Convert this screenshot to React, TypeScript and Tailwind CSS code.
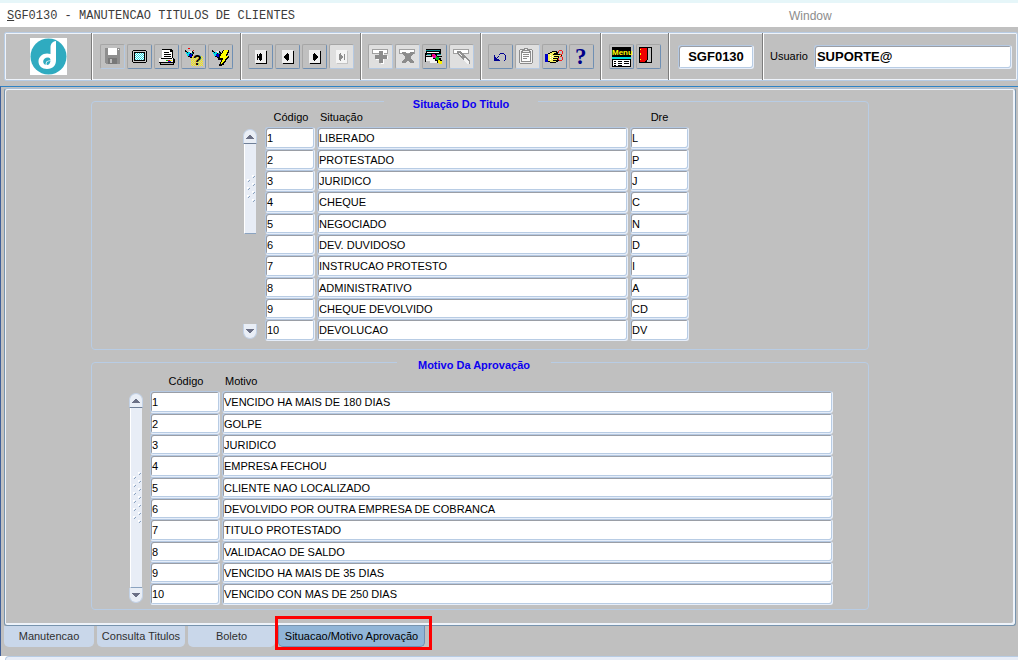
import type { ReactNode } from 'react';
import { clsx } from 'clsx';

const situacoes = [
  ['1', 'LIBERADO', 'L'],
  ['2', 'PROTESTADO', 'P'],
  ['3', 'JURIDICO', 'J'],
  ['4', 'CHEQUE', 'C'],
  ['5', 'NEGOCIADO', 'N'],
  ['6', 'DEV. DUVIDOSO', 'D'],
  ['7', 'INSTRUCAO PROTESTO', 'I'],
  ['8', 'ADMINISTRATIVO', 'A'],
  ['9', 'CHEQUE DEVOLVIDO', 'CD'],
  ['10', 'DEVOLUCAO', 'DV'],
];

const motivos = [
  ['1', 'VENCIDO HA MAIS DE 180 DIAS'],
  ['2', 'GOLPE'],
  ['3', 'JURIDICO'],
  ['4', 'EMPRESA FECHOU'],
  ['5', 'CLIENTE NAO LOCALIZADO'],
  ['6', 'DEVOLVIDO POR OUTRA EMPRESA DE COBRANCA'],
  ['7', 'TITULO PROTESTADO'],
  ['8', 'VALIDACAO DE SALDO'],
  ['9', 'VENCIDO HA MAIS DE 35 DIAS'],
  ['10', 'VENCIDO CON MAS DE 250 DIAS'],
];

const fieldClass =
  'block rounded-[3px] border border-t-[#b5c9e2] border-l-[#b5c9e2] border-r-[#e6eefa] border-b-[#e6eefa] bg-white text-black outline-none shadow-[inset_1px_1px_#9a9ea6,inset_-1px_-1px_#b8cce4]';

/* ---------- Toolbar icons, all on the 25px button grid ---------- */

function Icon({ children }: { children: ReactNode }) {
  return (
    <svg viewBox="0 0 25 25" className="block h-[25px] w-[25px]" shapeRendering="crispEdges" aria-hidden="true">
      {children}
    </svg>
  );
}

// Checkerboard of single pixels
function Dither({ x, y, width, height, color }: { x: number; y: number; width: number; height: number; color: string }) {
  let d = '';
  for (let row = 0; row < height; row++) {
    for (let col = row % 2; col < width; col += 2) {
      d += `M${x + col} ${y + row}h1v1h-1z`;
    }
  }
  return <path d={d} fill={color} />;
}

function SaveIcon() {
  return (
    <Icon>
      <path d="M5 4h14l1 1v15H6l-1-1z" fill="#8f8f8f" />
      <path d="M8 4h9v7H8z" fill="#fff" />
      <path d="M18 5h1v1h-1z" fill="#fff" />
      <path d="M8 14h9v6H8z" fill="#787878" />
      <path d="M10 15h2v4h-2z" fill="#c0c0c0" />
    </Icon>
  );
}

function ScreenIcon() {
  return (
    <Icon>
      <path d="M6 6h13v1h1v11h-1v1H6v-1H5V7h1z" fill="#000" />
      <path d="M6 7h13v11H6z" fill="#c8c8c8" />
      <path d="M7 8h11v9H7z" fill="#000" />
      <path d="M8 9h9v7H8z" fill="#fff" />
      <Dither x={8} y={9} width={9} height={7} color="#20d8e0" />
    </Icon>
  );
}

function PrinterIcon() {
  return (
    <Icon>
      <path d="M8 5h9l2 2v8H8z" fill="#000" />
      <path d="M8 6h8v2h2v7H8z" fill="#fff" />
      <path d="M10 8h5v1h-5zM10 10h7v1h-7zM10 12h7v1h-7z" fill="#000" />
      <path d="M5 14h15v1h1v4h-1v2H6v-2H5z" fill="#000" />
      <path d="M5 14h2v1h11v-1h1v4H5z" fill="#f0f0f0" />
      <path d="M7 19h12v1H7z" fill="#b0b0b0" />
      <path d="M12 16h2v1h-2z" fill="#00c000" />
      <path d="M14 16h2v1h-2z" fill="#f00000" />
      <path d="M16 16h2v1h-2z" fill="#f0f000" />
      <path d="M14 17h3v1h-3z" fill="#2020e0" />
    </Icon>
  );
}

function Torch() {
  return (
    <>
      <path d="M4 6h1v1h1v1h2V7h4v1h1v2h-1v2h-1v2H9v-1H7v-1H6v-2H5V8H4z" fill="#000" />
      <path d="M5 8h1v1h1v3H6v-2H5zM7 8h2v2H8v2H7z" fill="#00d8e8" />
      <path d="M8 10h3v3H9v-1H8z" fill="#0000d0" />
      <path d="M8 7h3v2H9V8H8z" fill="#e8e8e8" />
      <path d="M10 9h2v1h-2z" fill="#00a0a8" />
    </>
  );
}

function EnterQueryIcon() {
  return (
    <Icon>
      <Dither x={10} y={12} width={12} height={10} color="#fff000" />
      <Torch />
      <path d="M7 4h2v1H7zM12 6h1v1h-1z" fill="#f00000" />
      <text x="12" y="21" className="font-['Liberation_Sans',sans-serif] text-[14px] font-bold" fill="#000">
        ?
      </text>
    </Icon>
  );
}

function ExecuteQueryIcon() {
  return (
    <Icon>
      <Torch />
      <path d="M15 6h6v3h-1v2h-1v1h2v2h-1v1h-1v1h-1v2h-1v1h-1v2h-2v1h-3v-2h1v-2h1v-2h-3v-2h1v-2h1v-2h1V9h1V7h1z" fill="#000" />
      <path d="M15 6h5v2h-1v2h-1v2h2v1h-1v1h-1v1h-1v2h-1v1h-1v1h-1v1h-1v-2h1v-2h1v-2h-3v-2h1v-2h1V9h1V7h1z" fill="#ffff00" />
    </Icon>
  );
}

const glyphs = {
  first: 'M9 10h1v6H9zM14 10v6h-1v1h-1v-1h-1v-2h-1v-2h1v-2h1V9h1v1z',
  previous: 'M14 10v6h-1v1h-1v-1h-1v-1h-1v-1H9v-2h1v-1h1v-1h1V9h1v1z',
  next: 'M11 10v6h1v1h1v-1h1v-1h1v-1h1v-2h-1v-1h-1v-1h-1V9h-1v1z',
  last: 'M10 10v6h1v1h1v-2h1v-1h1v-2h-1v-1h-1V9h-1v1zM15 10h1v6h-1z',
};

function RecordIcon({ glyph, muted }: { glyph: keyof typeof glyphs; muted?: boolean }) {
  return (
    <Icon>
      <path d="M8 7h11v13H8z" fill={muted ? '#c4c4c4' : '#000'} />
      <path d="M7 6h11v13H7z" fill={muted ? '#f4f4f4' : '#f0f0f0'} />
      <path d={glyphs[glyph]} fill={muted ? '#8c8c8c' : '#000'} />
    </Icon>
  );
}

function RowBox() {
  return (
    <>
      <path d="M4 5h16v5H4z" fill="#a0a0a0" />
      <path d="M5 6h14v3H5z" fill="#fff" />
    </>
  );
}

function InsertIcon() {
  return (
    <Icon>
      <RowBox />
      <path d="M12 8h4v4h4v3h-4v5h-3v-4H8v-4h4z" fill="#fff" />
      <path d="M11 7h4v4h4v4h-4v4h-4v-4H7v-4h4z" fill="#8c8c8c" />
    </Icon>
  );
}

function RemoveIcon() {
  return (
    <Icon>
      <RowBox />
      <path d="M7 8h4v1h1v1h2V9h1V8h4v2h-1v1h-1v1h-1v3h1v1h1v1h1v2h-4v-1h-1v-1h-2v1h-1v1H7v-2h1v-1h1v-1h1v-3H9v-1H8v-1H7z" fill="#8c8c8c" />
    </Icon>
  );
}

function LockIcon() {
  return (
    <Icon>
      <path d="M4 5h15v6H4z" fill="#000" />
      <path d="M4 6h14v1H4zM5 10h14v1H5z" fill="#009090" />
      <path d="M5 8h12v1H5z" fill="#fff" />
      <path d="M3 9h1v9H3zM4 12h16v1H4z" fill="#000" />
      <path d="M4 13h13v6H8v-2H4z" fill="#f4f4f4" />
      <path d="M9 9h4v1h2v2h2v2h2v2h1v4h-3v-1h-2v-2h-2v-2h-2v-2H9z" fill="#000" />
      <path d="M10 10h3v1h1v3h-3v-1h-1z" fill="#f000b0" />
      <path d="M10 11h2v1h-2z" fill="#f02020" />
      <path d="M14 12h1v1h2v3h-3v-1h-1v-1h1z" fill="#00c020" />
      <path d="M16 16h2v1h2v3h-3v-1h-1z" fill="#f8f000" />
    </Icon>
  );
}

function ClearIcon() {
  return (
    <Icon>
      <RowBox />
      <path d="M8 7h4v1h1v1h1v1h1v1h1v1h1v1h1v1h1v1h1v1h1v4h-3v-1h-1v-1h-1v-1h-1v-1h-1v-1h-1v-1h-1v-1h-1v-1h-1v-1H9v-1H8z" fill="#909090" />
      <path d="M10 9h1v1h1v1h1v1h-1v-1h-1v-1h-1zM15 14h2v1h1v1h1v1h1v3h-2v-1h-1v-1h-1v-1h-1z" fill="#f4f4f4" />
    </Icon>
  );
}

function UndoIcon() {
  return (
    <Icon>
      <path
        d="M6 11h1v2h1v1h1v-1h1v-1h1v-2h1V9h4v1h1v1h1v5h-1v1h-1v-1h1v-5h-1v-1h-4v1h-1v2h-1v1h-1v1h2v1h1v1H6z"
        fill="#000090"
      />
    </Icon>
  );
}

function ClipboardIcon() {
  return (
    <Icon>
      <path d="M5 5h12v1h1v13h-1v1H5v-1H4V6h1z" fill="#8c8c8c" />
      <path d="M5 6h12v13H5z" fill="#f2f2f2" />
      <path d="M6 7h10v11H6z" fill="#8c8c8c" />
      <path d="M7 8h8v9H7z" fill="#fff" />
      <path d="M9 4h4v2h2v3H7V6h2z" fill="#8c8c8c" />
      <path d="M10 5h2v1h-2zM8 7h6v1H8z" fill="#f2f2f2" />
      <path d="M8 10h6v1H8zM8 12h6v1H8zM8 14h4v1H8z" fill="#8c8c8c" />
    </Icon>
  );
}

function HandIcon() {
  return (
    <Icon>
      <path d="M3 10h3v8H3z" fill="#0000c8" />
      <path d="M6 9h2V8h2V7h5v1h1v2h4v2h-3v5h-1v1h-2v1H8v-1H6z" fill="#000" />
      <path d="M6 10h2V9h2V8h4v1h-2v1h-1v1h8v1h-7v1h4v1h-5v1h4v1h-4v1h3v1H8v-1H6z" fill="#f8f060" />
      <path d="M8 11h1v1H8zM10 12h1v1h-1zM8 13h1v1H8zM10 14h1v1h-1zM8 15h1v1H8z" fill="#fff" />
      <path d="M17 6h3v1h1v3h-1v1h-2v-1h2V7h-3v2h-1V7h1zM17 17h3v-1h1v-3h-1v-1h-2v1h2v3h-3v-2h-1v2h1z" fill="#f02020" />
    </Icon>
  );
}

function HelpIcon() {
  return (
    <Icon>
      <text x="6" y="20" className="font-['Liberation_Serif',serif] text-[23px] font-bold" fill="#000088">
        ?
      </text>
    </Icon>
  );
}

function MenuIcon() {
  return (
    <Icon>
      <path d="M3 3h19v20H3z" fill="#000" />
      <text x="3" y="11" className="font-['Liberation_Sans',sans-serif] text-[8px] font-bold" fill="#ffff00">
        Menu
      </text>
      <path d="M3 13h19v2H3z" fill="#00e0e0" />
      <path d="M4 16h17v6H4z" fill="#fff" />
      <path d="M5 17h2v1H5zM9 17h4v1H9zM15 17h5v1h-5zM5 19h2v1H5zM9 19h4v1H9zM15 19h5v1h-5zM5 21h2v1H5zM9 21h4v1H9z" fill="#000" />
    </Icon>
  );
}

function ExitIcon() {
  return (
    <Icon>
      <path d="M3 3h13v16H3z" fill="#000" />
      <path d="M11 4h4v14h-4z" fill="#c0c0c0" />
      <path d="M4 4h7v12h-1v1H9v1H4z" fill="#f00000" />
      <path d="M11 4h1v12h-1v1h-1v1H9v-1h1v-1h1z" fill="#000" />
      <path d="M4 9h1v2H4zM4 5h1v1H4zM4 15h1v1H4z" fill="#ffff00" />
    </Icon>
  );
}

function Logo() {
  return (
    <svg viewBox="0 0 37 37" className="block h-[37px] w-[37px]" role="img" aria-label="Logo">
      <path d="M0 0h37v37H0z" fill="#fff" />
      <circle cx="18.500" cy="18.500" r="18" fill="#2fabc0" />
      <path
        d="M26 3c-4 .5-5.500 3-5.500 7v6c-6-2-12 1.500-12 7.500 0 4.500 3.500 7.500 8.500 7.500 6 0 9-3.500 9-9z"
        fill="#fff"
      />
      <path d="M18 19.500c-3 0-4.800 1.700-4.800 4 0 1.700 1 3 2.600 3.300-.4-2.800.7-4.300 4.700-4.300 0-2-.8-3-2.500-3z" fill="#2fabc0" />
      <path d="M16.500 26.500c.5 1 3.500.5 4-3.500-3 0-4.300 1-4 3.500z" fill="#2fabc0" />
    </svg>
  );
}

/* ---------- Toolbar ---------- */

type Tool = { name: string; icon: ReactNode; disabled?: boolean; plate?: boolean };

const toolGroups: Tool[][] = [
  [
    { name: 'Salvar', icon: <SaveIcon />, disabled: true },
    { name: 'Tela', icon: <ScreenIcon /> },
    { name: 'Imprimir', icon: <PrinterIcon /> },
    { name: 'Entrar consulta', icon: <EnterQueryIcon /> },
    { name: 'Executar consulta', icon: <ExecuteQueryIcon /> },
  ],
  [
    { name: 'Primeiro registro', icon: <RecordIcon glyph="first" /> },
    { name: 'Registro anterior', icon: <RecordIcon glyph="previous" /> },
    { name: 'Proximo registro', icon: <RecordIcon glyph="next" /> },
    { name: 'Ultimo registro', icon: <RecordIcon glyph="last" muted />, disabled: true, plate: true },
  ],
  [
    { name: 'Inserir registro', icon: <InsertIcon />, disabled: true, plate: true },
    { name: 'Remover registro', icon: <RemoveIcon />, disabled: true, plate: true },
    { name: 'Bloquear registro', icon: <LockIcon /> },
    { name: 'Limpar registro', icon: <ClearIcon />, disabled: true, plate: true },
  ],
  [
    { name: 'Desfazer', icon: <UndoIcon /> },
    { name: 'Colar', icon: <ClipboardIcon />, disabled: true, plate: true },
    { name: 'Recortar', icon: <HandIcon /> },
    { name: 'Ajuda', icon: <HelpIcon /> },
  ],
  [
    { name: 'Menu', icon: <MenuIcon /> },
    { name: 'Sair', icon: <ExitIcon /> },
  ],
];

function Separator() {
  return <div className="w-[2px] shrink-0 self-stretch border-r border-l border-r-white border-l-[#7c7c7c]" />;
}

function ToolButton({ name, icon, disabled, plate }: Tool) {
  return (
    <button
      type="button"
      aria-label={name}
      disabled={disabled}
      className={clsx(
        'h-[25px] w-[25px] shrink-0 rounded-[2px] border',
        disabled
          ? 'border-t-[#a6a6a6] border-l-[#a6a6a6] border-r-[#b5c9e2] border-b-[#b5c9e2]'
          : 'border-t-[#a6a6a6] border-l-[#a6a6a6] border-r-[#6f8fb3] border-b-[#6f8fb3]',
        plate && 'bg-[#dfdfdf]',
      )}
    >
      <span className="-m-px block">{icon}</span>
    </button>
  );
}

function Toolbar() {
  return (
    <div className="mt-[5px] ml-1 flex h-[49px] items-center rounded-[2px] border border-[#b8cce4] shadow-[inset_0_0_0_1px_#eef3fa]">
      <div className="flex w-[86px] shrink-0 justify-center">
        <Logo />
      </div>
      <Separator />
      {toolGroups.map((group, index) => (
        <div key={index} className="flex shrink-0 items-center self-stretch">
          <div className={clsx('flex gap-[2px]', index === 0 || group.length === 2 ? 'px-[7px]' : 'px-[6px]')}>
            {group.map((tool) => (
              <ToolButton key={tool.name} {...tool} />
            ))}
          </div>
          <Separator />
        </div>
      ))}
      <div className="shrink-0 px-2">
        <input
          aria-label="Programa"
          defaultValue="SGF0130"
          className={clsx(fieldClass, 'h-6 w-[76px] text-center text-[13px] font-bold')}
        />
      </div>
      <Separator />
      <label className="flex min-w-0 flex-1 items-center gap-[6px] pr-[5px] pl-[6px] text-[11px]">
        Usuario
        <input
          defaultValue="SUPORTE@"
          className={clsx(fieldClass, 'h-6 min-w-0 flex-1 px-[2px] text-[13px] font-bold')}
        />
      </label>
    </div>
  );
}

/* ---------- Record blocks ---------- */

function Grip({ rows }: { rows: number }) {
  const dots = Array.from({ length: rows }, (_, i) => ({ x: i % 2 ? 2 : 7, y: i * 4 }));
  return (
    <svg width="12" height={rows * 4} className="block" shapeRendering="crispEdges" aria-hidden="true">
      {dots.map(({ x, y }) => (
        <g key={y}>
          <path d={`M${x} ${y}h2v1h-1v1h-1z`} fill="#fff" />
          <path d={`M${x + 1} ${y + 2}h1v-1h1v1h-1v1h-1z`} fill="#8ba3c0" />
        </g>
      ))}
    </svg>
  );
}

function ScrollBar({ full }: { full?: boolean }) {
  return (
    <div className="flex w-[14px] shrink-0 flex-col pt-[18px] pb-[2px]">
      <button
        type="button"
        aria-label="Subir"
        className="flex h-[15px] items-center justify-center rounded-t-[7px] border border-[#c3d2e6] border-b-[#6f7f98] bg-[#e9eef6]"
      >
        <svg width="8" height="4" shapeRendering="crispEdges" aria-hidden="true">
          <path d="M3 0h2v1h1v1h1v1h1v1H0V3h1V2h1V1h1z" fill="#6b7086" />
        </svg>
      </button>
      <div
        className={clsx(
          'mx-px flex items-center justify-center border-b border-l border-b-[#8ba3c0] border-l-white bg-[#e8edf6]',
          full ? 'flex-1' : 'h-[90px]',
        )}
      >
        <Grip rows={full ? 13 : 7} />
      </div>
      <button
        type="button"
        aria-label="Descer"
        className="mt-auto flex h-[15px] items-center justify-center rounded-b-[7px] border border-t-0 border-[#c3d2e6] bg-[#e9eef6]"
      >
        <svg width="8" height="4" shapeRendering="crispEdges" aria-hidden="true">
          <path d="M0 0h8v1H7v1H6v1H5v1H3V3H2V2H1V1H0z" fill="#6b7086" />
        </svg>
      </button>
    </div>
  );
}

type RecordTableProps = {
  headers: { label: string; className: string }[];
  rows: string[][];
  className: string;
};

function RecordTable({ headers, rows, className }: RecordTableProps) {
  return (
    <table className={clsx('table-fixed border-collapse text-[11px]', className)}>
      <thead>
        <tr className="h-4">
          {headers.map((header) => (
            <th key={header.label} className={clsx('p-0 align-top leading-3 font-normal', header.className)}>
              {header.label}
            </th>
          ))}
        </tr>
      </thead>
      <tbody>
        {rows.map((row) => (
          <tr key={row[0]} className="group">
            {row.map((value, column) => (
              <td key={column} className="p-0 pr-[2px] last:pr-0">
                <input
                  aria-label={`${headers[column].label} ${row[0]}`}
                  defaultValue={value}
                  className={clsx(fieldClass, 'h-[21px] w-full px-px group-[:nth-child(3n+1)]:h-[22px]')}
                />
              </td>
            ))}
          </tr>
        ))}
      </tbody>
    </table>
  );
}

function BlockTitle({ className, children }: { className: string; children: ReactNode }) {
  return (
    <legend className={clsx('w-[154px] pt-[6px] text-[11px] leading-[14px] font-bold text-[#0d00f0]', className)}>
      <span className="block text-center">{children}</span>
    </legend>
  );
}

function SituacaoBlock() {
  return (
    <fieldset className="mr-[146px] ml-[86px] rounded-[4px] border border-[#b8cce4] pb-2">
      <BlockTitle className="ml-[292px]">Situação Do Titulo</BlockTitle>
      <div className="ml-[151px] flex gap-2">
        <ScrollBar />
        <RecordTable
          className="w-[424px]"
          headers={[
            { label: 'Código', className: 'w-[52px] text-center' },
            { label: 'Situação', className: 'pl-[3px]! text-left' },
            { label: 'Dre', className: 'w-[59px] text-center' },
          ]}
          rows={situacoes}
        />
      </div>
    </fieldset>
  );
}

function MotivoBlock() {
  return (
    <fieldset className="mt-[2px] mr-[146px] ml-[86px] rounded-[4px] border border-[#b8cce4] pb-1">
      <BlockTitle className="ml-[305px]">Motivo Da Aprovação</BlockTitle>
      <div className="mr-[35px] ml-[37px] flex gap-[7px] pt-[3px]">
        <ScrollBar full />
        <RecordTable
          className="min-w-0 flex-1"
          headers={[
            { label: 'Código', className: 'w-[72px] text-center' },
            { label: 'Motivo', className: 'pl-[3px]! text-left' },
          ]}
          rows={motivos}
        />
      </div>
    </fieldset>
  );
}

/* ---------- Tabs ---------- */

const tabs = [
  { name: 'Manutencao', className: 'w-[90px]' },
  { name: 'Consulta Titulos', className: 'w-[88px]' },
  { name: 'Boleto', className: 'w-[87px]' },
];

function Tabs() {
  return (
    <div role="tablist" className="flex h-[30px] items-start gap-[3px] pl-[3px] text-[11px] text-[#303030]">
      {tabs.map((tab) => (
        <button
          key={tab.name}
          type="button"
          role="tab"
          aria-selected={false}
          className={clsx('h-[21px] rounded-b-[5px] bg-[#c9d7ea] whitespace-nowrap', tab.className)}
        >
          {tab.name}
        </button>
      ))}
      <div className="relative">
        <button
          type="button"
          role="tab"
          aria-selected
          className="block h-[21px] w-[147px] rounded-b-[5px] border border-t-0 border-[#6f8fb3] bg-[#91b5d7] whitespace-nowrap text-black"
        >
          Situacao/Motivo Aprovação
        </button>
        {/* Highlight frame around the current tab */}
        <div className="pointer-events-none absolute -top-[10px] -right-[7px] -bottom-[3px] -left-[3px] border-3 border-[#fe0000]" />
      </div>
    </div>
  );
}

export default function App() {
  return (
    <div className="min-h-screen bg-white font-['Liberation_Sans',Arial,sans-serif] text-black">
      <header className="flex h-[27px] items-center border-t-3 border-[#e6f6f9] pt-px pl-[7px] text-[#3c3c3c]">
        <h1 className="w-[782px] font-['Liberation_Mono','Courier_New',monospace] text-[12px]">
          <span className="underline">S</span>GF0130 - MANUTENCAO TITULOS DE CLIENTES
        </h1>
        <button type="button" className="text-[12px] text-[#8c8c8c]">
          Window
        </button>
      </header>

      <div className="flow-root bg-[#c0c0c0]">
        <Toolbar />
        <main className="mt-[5px] border-t border-l border-t-[#2f83c6] border-l-[#40609a]">
          <div className="mt-px mr-[2px] ml-[3px] rounded-[3px] border border-[#7894ae] border-t-[#a9bfd6] pt-[2px] pb-[15px] shadow-[inset_1px_1px_#eef3fa,inset_-2px_-2px_#eef3fa]">
            <SituacaoBlock />
            <MotivoBlock />
          </div>
          <Tabs />
        </main>
      </div>

      <footer className="ml-[5px] h-1 rounded-tl-[4px] border-t border-l border-[#b8cce4] bg-[#e8edf7]" />
    </div>
  );
}
